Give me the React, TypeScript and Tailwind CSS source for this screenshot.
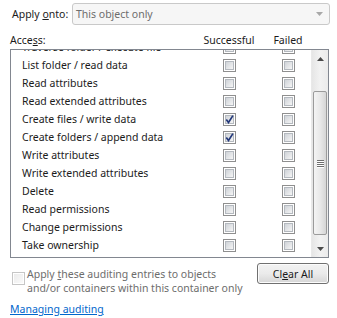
import React from "react";

const rows: { label: string; s: boolean; f: boolean }[] = [
  { label: "Traverse folder / execute file", s: false, f: false },
  { label: "List folder / read data", s: false, f: false },
  { label: "Read attributes", s: false, f: false },
  { label: "Read extended attributes", s: false, f: false },
  { label: "Create files / write data", s: true, f: false },
  { label: "Create folders / append data", s: true, f: false },
  { label: "Write attributes", s: false, f: false },
  { label: "Write extended attributes", s: false, f: false },
  { label: "Delete", s: false, f: false },
  { label: "Read permissions", s: false, f: false },
  { label: "Change permissions", s: false, f: false },
  { label: "Take ownership", s: false, f: false },
];

function Check({ checked, disabled }: { checked?: boolean; disabled?: boolean }) {
  return (
    <div
      className={
        disabled
          ? "w-[13px] h-[13px] border border-[#c6c6c6] bg-white p-[1px] shrink-0"
          : "w-[13px] h-[13px] border border-[#8f8f8f] bg-white p-[1px] shrink-0"
      }
    >
      <div
        className={
          disabled
            ? "w-full h-full bg-gradient-to-br from-[#ebebeb] to-[#fafafa]"
            : "w-full h-full border border-[#b4b9bf] bg-gradient-to-br from-[#cfd3d8] to-[#f5f5f5] relative"
        }
      >
        {checked && (
          <svg viewBox="0 0 9 9" className="absolute left-[-1px] top-[-1px] w-[9px] h-[9px]">
            <path d="M1.3 4.4 L3.5 7.4 L7.9 0.6" fill="none" stroke="#23387a" strokeWidth="1.7" />
          </svg>
        )}
      </div>
    </div>
  );
}

export default function App() {
  return (
    <div
      className="w-[337px] h-[318px] bg-white text-[10.5px] leading-[14px] text-[#1b1b1b] overflow-hidden whitespace-nowrap"
      style={{ fontFamily: '"Segoe UI", "Noto Sans", sans-serif' }}
    >
      <div className="flex items-center pt-[3px]">
        <span className="pl-[12px] w-[72px]">
          Apply <span className="underline">o</span>nto:
        </span>
        <div className="w-[258px] h-[22px] border border-[#c9c9c9] rounded-[3px] bg-[#f6f6f6] flex items-center pl-[3px] pr-[6px] text-[#6d6d6d]">
          <span className="flex-1">This object only</span>
          <svg viewBox="0 0 7 4" className="w-[7px] h-[4px]">
            <path d="M0 0 L7 0 L3.5 4 Z" fill="#a8a8a8" />
          </svg>
        </div>
      </div>

      <div className="flex mt-[7px] h-[15px] items-center">
        <span className="pl-[10px] w-[203px]">
          Acce<span className="underline">s</span>s:
        </span>
        <span className="w-[52px] text-center">Successful</span>
        <span className="w-[16px]" />
        <span className="w-[34px] text-center">Failed</span>
      </div>

      <div className="ml-[10px] mt-[2px] w-[319px] h-[209px] border border-[#828790] flex">
        <div className="flex-1 overflow-hidden">
          <div className="-mt-[12px]">
            {rows.map((r) => (
              <div key={r.label} className="h-[18px] flex items-center">
                <span className="w-[212px] pl-[11px]">{r.label}</span>
                <Check checked={r.s} />
                <span className="w-[46px]" />
                <Check checked={r.f} />
              </div>
            ))}
          </div>
        </div>
        <div className="w-[17px] h-full flex flex-col bg-gradient-to-r from-[#e6e6e6] via-[#f2f2f2] to-[#ebebeb] border-l border-[#e9e9e9]">
          <div className="h-[17px] flex items-center justify-center">
            <svg viewBox="0 0 7 4" className="w-[7px] h-[4px]">
              <path d="M0 4 L7 4 L3.5 0 Z" fill="#4a4a4a" />
            </svg>
          </div>
          <div className="flex-1 flex flex-col pt-[24px] pb-[4px] px-[1px]">
            <div className="h-[144px] border border-[#9b9b9b] rounded-[2px] bg-gradient-to-r from-[#f4f4f4] via-[#e9e9e9] to-[#d6d6d6] flex flex-col items-center justify-center gap-[1px]">
              <div className="w-[7px] h-[1px] bg-[#6e6e6e] shadow-[0_1px_0_#ffffff]" />
              <div className="w-[7px] h-[1px] bg-[#6e6e6e] shadow-[0_1px_0_#ffffff]" />
              <div className="w-[7px] h-[1px] bg-[#6e6e6e] shadow-[0_1px_0_#ffffff]" />
              <div className="w-[7px] h-[1px] bg-[#6e6e6e] shadow-[0_1px_0_#ffffff]" />
            </div>
          </div>
          <div className="h-[17px] flex items-center justify-center">
            <svg viewBox="0 0 7 4" className="w-[7px] h-[4px]">
              <path d="M0 0 L7 0 L3.5 4 Z" fill="#4a4a4a" />
            </svg>
          </div>
        </div>
      </div>

      <div className="flex items-start mt-[4px] pl-[12px]">
        <div className="mt-[10px]">
          <Check disabled />
        </div>
        <div className="ml-[2px] mt-[5px] text-[#6d6d6d] w-[218px]">
          <div>
            Apply <span className="underline">t</span>hese auditing entries to objects
          </div>
          <div>and/or containers within this container only</div>
        </div>
        <button className="ml-[12px] mt-[1px] w-[72px] h-[21px] border border-[#707070] rounded-[3px] bg-gradient-to-b from-[#f2f2f2] via-[#ebebeb] to-[#d6d6d6] text-[#1b1b1b] shadow-[inset_0_0_0_1px_#fcfcfc]">
          Cl<span className="underline">e</span>ar All
        </button>
      </div>

      <div className="pl-[10px] mt-[7px]">
        <span className="text-[#0066cc] underline">Managing auditing</span>
      </div>
    </div>
  );
}
